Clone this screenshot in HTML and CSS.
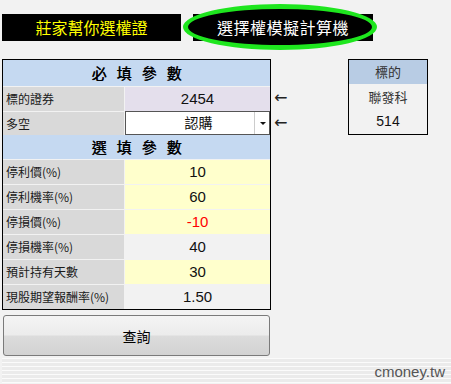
FILE: index.html
```html
<!DOCTYPE html>
<html>
<head>
<meta charset="utf-8">
<link rel="stylesheet" href="styles.css">
</head>
<body>
<div class="page">
  <div class="topbar">
    <div class="tab tab-yellow">莊家幫你選權證</div>
    <div class="tab tab-active"><span class="ring"></span><span class="tab-text">選擇權模擬計算機</span></div>
  </div>
  <div class="main">
    <div class="left">
      <div class="table">
        <div class="thead thead1">必填參數</div>
        <div class="row"><div class="lbl">標的證券</div><div class="val lav">2454</div></div>
        <div class="row row-select"><div class="lbl">多空</div><div class="val select"><span class="sel-text">認購</span><span class="caret"></span></div></div>
        <div class="thead thead2">選填參數</div>
        <div class="row"><div class="lbl">停利價(%)</div><div class="val yel">10</div></div>
        <div class="row"><div class="lbl">停利機率(%)</div><div class="val yel">60</div></div>
        <div class="row"><div class="lbl">停損價(%)</div><div class="val yel red">-10</div></div>
        <div class="row"><div class="lbl">停損機率(%)</div><div class="val gry">40</div></div>
        <div class="row"><div class="lbl">預計持有天數</div><div class="val yel">30</div></div>
        <div class="row"><div class="lbl">現股期望報酬率(%)</div><div class="val gry">1.50</div></div>
      </div>
      <button class="query">查詢</button>
    </div>
    <div class="arrows"><span class="arrow">←</span><span class="arrow">←</span></div>
    <div class="target">
      <div class="target-head">標的</div>
      <div class="target-row">聯發科</div>
      <div class="target-row num">514</div>
    </div>
  </div>
  <div class="stripes"><span class="brand">cmoney.tw</span></div>
</div>
</body>
</html>
```
FILE: styles.css
```css
html, body {
  margin: 0;
  padding: 0;
  background: #f2f2f2;
}
.page {
  width: 451px;
  height: 384px;
  overflow: hidden;
  font-family: "Noto Sans CJK TC", "Liberation Sans", sans-serif;
  color: #111;
}
.topbar {
  display: flex;
  gap: 12px;
  padding-left: 2px;
  margin-top: 14px;
  height: 27px;
}
.tab {
  background: #000;
  height: 27px;
  display: flex;
  align-items: center;
  justify-content: center;
  font-size: 16px;
  line-height: 27px;
}
.tab-yellow {
  width: 179px;
  color: #ffff00;
}
.tab-active {
  width: 180px;
  color: #fff;
  position: relative;
}
.ring {
  position: absolute;
  left: -10px;
  top: -10px;
  width: 194px;
  height: 46px;
  box-sizing: border-box;
  border: 5px solid #1ee61e;
  border-radius: 50%;
  background: #000;
}
.tab-text {
  position: relative;
  letter-spacing: 0.5px;
}
.main {
  display: flex;
  align-items: flex-start;
  padding-left: 2px;
  margin-top: 18px;
}
.left {
  width: 269px;
  display: flex;
  flex-direction: column;
}
.table {
  border: 1px solid #000;
  width: 267px;
  background: #f2f2f2;
}
.thead {
  background: #c5d9f1;
  text-align: center;
  font-weight: normal;
  font-size: 15px;
  letter-spacing: 10px;
  padding-left: 10px;
  color: #000;
  text-shadow: 0.4px 0 0 #000;
}
.thead1 {
  height: 26px;
  line-height: 26px;
}
.thead2 {
  height: 24px;
  line-height: 24px;
}
.row {
  display: flex;
  height: 25px;
}
.lbl {
  width: 121px;
  box-sizing: border-box;
  border-top: 1px solid #f2f2f2;
  background: #d9d9d9;
  font-size: 12px;
  line-height: 24px;
  padding-left: 3px;
  white-space: nowrap;
  color: #1a1a1a;
}
.val {
  flex: 1;
  box-sizing: border-box;
  border-top: 1px solid #f2f2f2;
  border-left: 1px solid #f2f2f2;
  text-align: center;
  font-family: "Liberation Sans", sans-serif;
  font-size: 15px;
  line-height: 24px;
  color: #111;
}
.lav { background: #e4dfec; }
.yel { background: #ffffcc; }
.gry { background: #f2f2f2; }
.red { color: #ff0000; }
.row-select {
  height: 24px;
}
.val.select {
  background: #fff;
  border: 1px solid #555;
  margin-left: 1px;
  position: relative;
  line-height: 21px;
  font-family: "Noto Sans CJK TC", sans-serif;
  font-size: 14px;
}
.sel-text {
  position: relative;
  left: 1px;
}
.caret {
  position: absolute;
  right: 0;
  top: 0;
  bottom: 0;
  width: 14px;
  border-left: 1px solid #ccc;
}
.caret::after {
  content: "";
  position: absolute;
  left: 5px;
  top: 10px;
  border-left: 3px solid transparent;
  border-right: 3px solid transparent;
  border-top: 3px solid #111;
}
.query {
  margin: 5px 0 0 1px;
  width: 267px;
  height: 41px;
  border: 1px solid #7a7a7a;
  border-radius: 3px;
  background: linear-gradient(#f4f4f4 0%, #ececec 48%, #dcdcdc 52%, #d2d2d2 100%);
  font-family: "Noto Sans CJK TC", sans-serif;
  font-size: 14px;
  color: #000;
  padding: 0;
}
.arrows {
  width: 77px;
  display: flex;
  flex-direction: column;
  padding-top: 27px;
  padding-left: 3px;
  box-sizing: border-box;
}
.arrow {
  height: 25px;
  line-height: 24px;
  font-family: "DejaVu Sans", sans-serif;
  font-size: 16px;
  color: #222;
}
.target {
  width: 80px;
  box-sizing: border-box;
  border: 1px solid #000;
  text-align: center;
  color: #333;
  font-size: 13px;
}
.target-head {
  background: #b8cce4;
  height: 24px;
  line-height: 24px;
}
.target-row {
  height: 25px;
  line-height: 25px;
}
.target-row.num {
  font-family: "Liberation Sans", sans-serif;
  font-size: 14px;
  color: #111;
}
.stripes {
  margin: 2px 0 0 2px;
  height: 25px;
  background: repeating-linear-gradient(#fbfbfb 0px, #fbfbfb 1px, #ebebeb 1px, #ebebeb 4px);
  display: flex;
  justify-content: flex-end;
  align-items: center;
  padding-right: 6px;
}
.brand {
  font-family: "Liberation Sans", sans-serif;
  font-size: 15px;
  color: #555;
  line-height: 20px;
  margin-top: 3px;
}
```
